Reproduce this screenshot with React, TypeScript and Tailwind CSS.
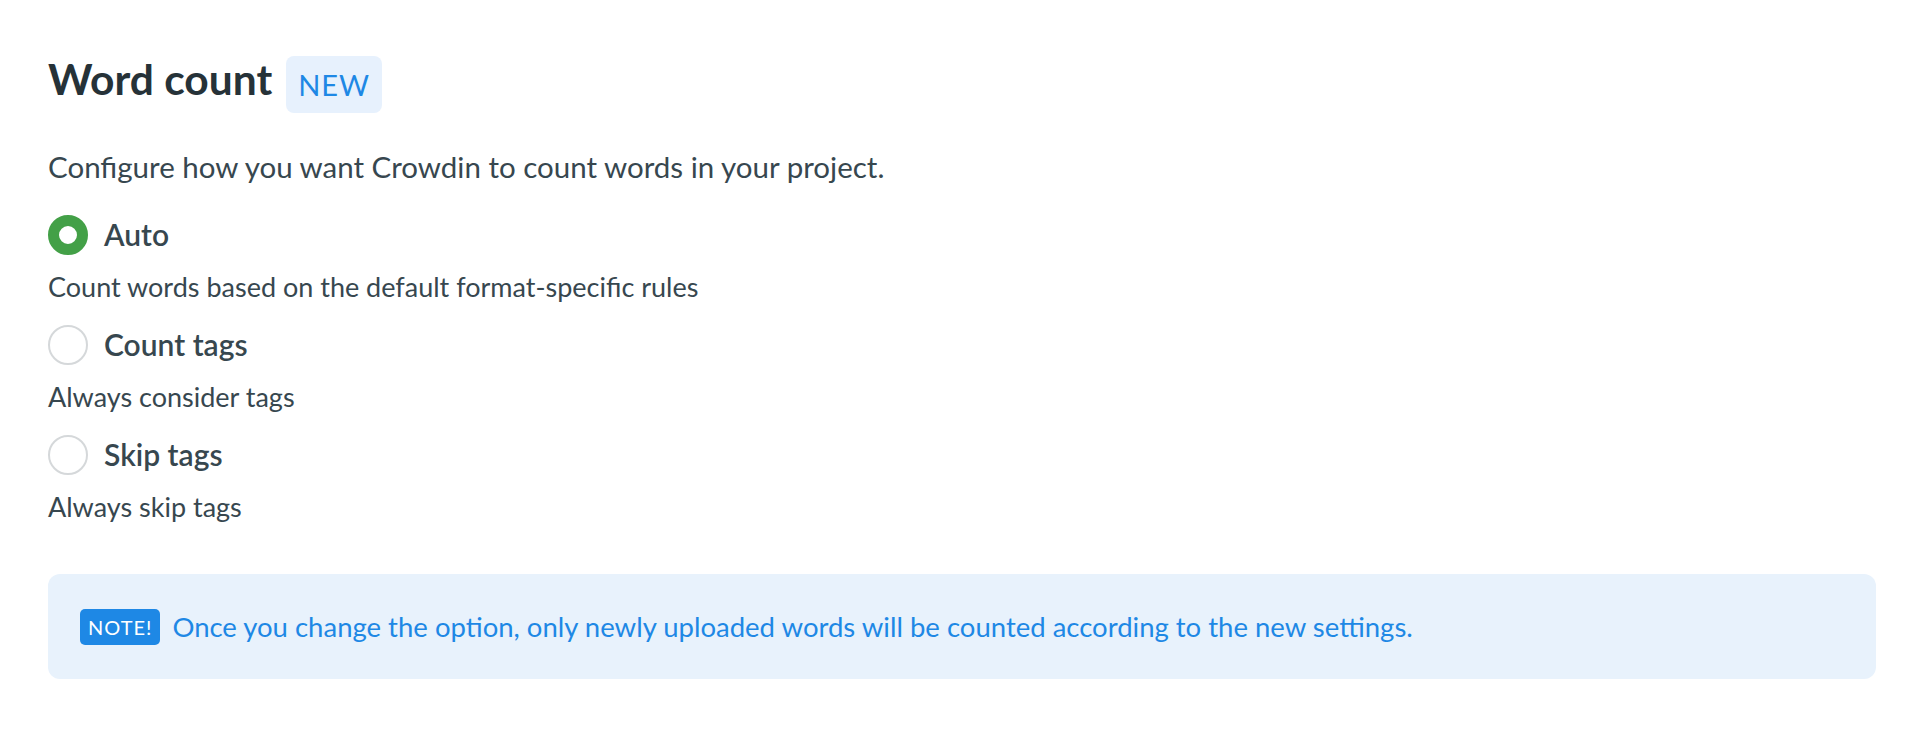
import React, { useState } from "react";

type Option = {
    id: string;
    label: string;
    hint: string;
};

const options: Option[] = [
    { id: "auto", label: "Auto", hint: "Count words based on the default format-specific rules" },
    { id: "count", label: "Count tags", hint: "Always consider tags" },
    { id: "skip", label: "Skip tags", hint: "Always skip tags" },
];

const Radio = ({ checked }: { checked: boolean }) => {
    if (checked)
        return <span className="w-[40px] h-[40px] rounded-full border-[11px] border-[#43a047] bg-white shrink-0 box-border" />;
    return <span className="w-[40px] h-[40px] rounded-full border-2 border-[#d5d8da] bg-white shrink-0 box-border" />;
};

const App = () => {
    const [value, setValue] = useState("auto");

    return (
        <div className="min-h-[735px] bg-white px-12 pt-[56px] text-[#37474f]" style={{ fontFamily: "Lato, 'Noto Sans', sans-serif" }}>
            <div className="flex items-start gap-[14px]">
                <h1 className="text-[42.5px] leading-[46px] font-bold text-[#263238]">Word count</h1>
                <span className="h-[57px] px-[12px] flex items-center rounded-lg bg-[#e7f1fd] text-[#1e88e5] text-[29px] tracking-[1px]">NEW</span>
            </div>

            <p className="mt-[36px] text-[29.5px] leading-[36px]">
                Configure how you want Crowdin to count words in your project.
            </p>

            <div className="mt-[30px]">
                {options.map((opt, i) => (
                    <div key={opt.id} className={i === 0 ? "" : "mt-[22px]"}>
                        <label className="flex items-center h-[40px] gap-[16px] cursor-pointer" onClick={() => setValue(opt.id)}>
                            <Radio checked={value === opt.id} />
                            <span className="text-[30px] leading-[36px] font-semibold -mt-[3px]">{opt.label}</span>
                        </label>
                        <p className="mt-[16px] text-[27px] leading-[32px]">{opt.hint}</p>
                    </div>
                ))}
            </div>

            <div className="mt-[51px] h-[105px] rounded-xl bg-[#e8f2fc] pl-8 flex items-center gap-[12px] text-[#1e88e5]">
                <span className="h-[36px] px-[8px] flex items-center rounded-[5px] bg-[#1e88e5] text-white text-[20px] tracking-[1px]">NOTE!</span>
                <span className="text-[27.5px]">Once you change the option, only newly uploaded words will be counted according to the new settings.</span>
            </div>
        </div>
    );
};

export default App;
